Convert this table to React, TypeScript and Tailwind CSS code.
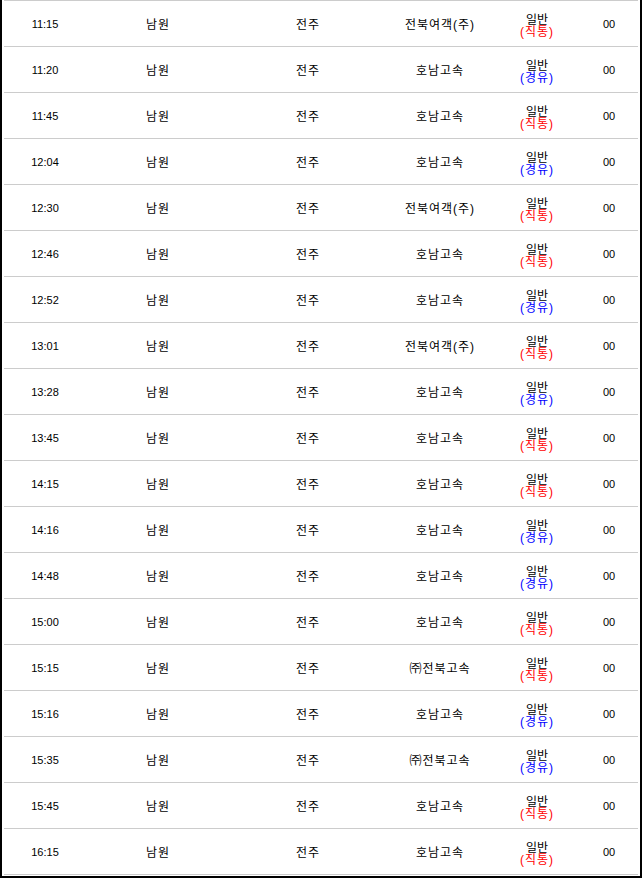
const rows: [string, string, "직통" | "경유"][] = [
  ["11:15", "전북여객(주)", "직통"],
  ["11:20", "호남고속", "경유"],
  ["11:45", "호남고속", "직통"],
  ["12:04", "호남고속", "경유"],
  ["12:30", "전북여객(주)", "직통"],
  ["12:46", "호남고속", "직통"],
  ["12:52", "호남고속", "경유"],
  ["13:01", "전북여객(주)", "직통"],
  ["13:28", "호남고속", "경유"],
  ["13:45", "호남고속", "직통"],
  ["14:15", "호남고속", "직통"],
  ["14:16", "호남고속", "경유"],
  ["14:48", "호남고속", "경유"],
  ["15:00", "호남고속", "직통"],
  ["15:15", "㈜전북고속", "직통"],
  ["15:16", "호남고속", "경유"],
  ["15:35", "㈜전북고속", "경유"],
  ["15:45", "호남고속", "직통"],
  ["16:15", "호남고속", "직통"],
];

const font = {
  fontFamily: '"Liberation Sans", "Noto Sans CJK KR", sans-serif',
};

export default function App() {
  return (
    <div
      className="w-[642px] h-[878px] bg-white border-l-2 border-r-2 border-b-2 border-black px-[2px] overflow-hidden text-[12px] text-black"
      style={font}
    >
      <div className="border-t border-[#cccccc]">
        {rows.map(([time, company, kind]) => (
          <div
            key={time}
            className="grid grid-cols-[82px_144px_156px_108px_86px_58px] h-[46px] items-center border-b border-[#cccccc] text-center pt-[2px]"
          >
            <span className="text-[11px] text-black">{time}</span>
            <span className="tracking-[1px] text-black">남원</span>
            <span className="tracking-[1px] text-black">전주</span>
            <span className="tracking-[1px] text-black">{company}</span>
            <div className="flex flex-col items-center leading-[12px] pt-[2px]">
              <span className="text-black">일반</span>
              <span
                className={
                  kind === "직통"
                    ? "text-[#ff0000] tracking-[1px]"
                    : "text-[#0000ff] tracking-[1px]"
                }
              >
                ({kind})
              </span>
            </div>
            <span className="text-[11px] text-black">00</span>
          </div>
        ))}
      </div>
    </div>
  );
}
